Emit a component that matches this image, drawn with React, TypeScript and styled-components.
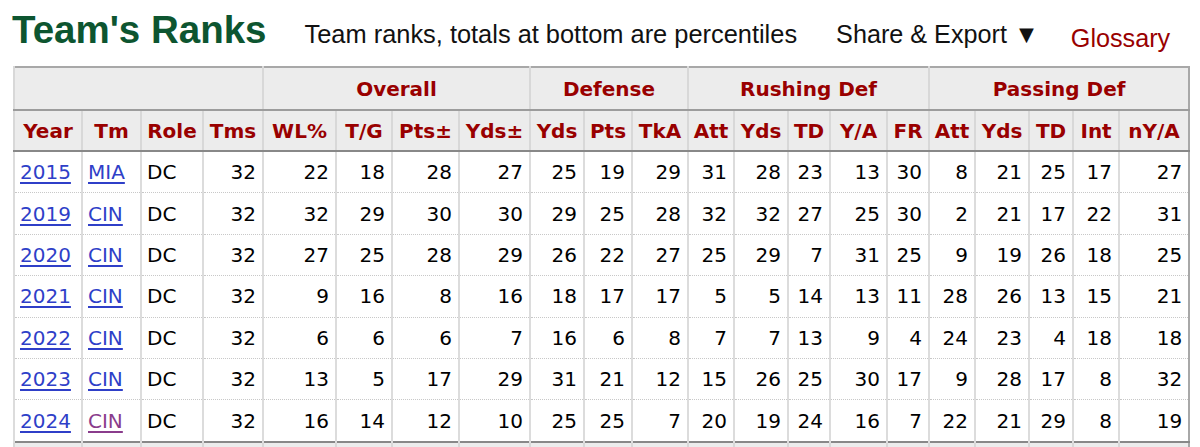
import styled, { createGlobalStyle } from "styled-components";

const GlobalStyle = createGlobalStyle`
  body {
    margin: 0;
    background: #fff;
    font-family: "DejaVu Sans", Verdana, sans-serif;
  }
`

const Page = styled.div`
  padding: 8px 12px 0 13px;
  width: 1175px;
`

const HeadingBar = styled.div`
  display: flex;
  align-items: baseline;
  height: 58px;
  font-family: "Liberation Sans", Arial, sans-serif;
`

const Title = styled.h2`
  margin: 0;
  font-size: 38.5px;
  font-weight: 700;
  color: #0d5530;
  margin-right: 38px;
  margin-left: -1px;
`

const Note = styled.span`
  font-size: 25.4px;
  color: #111;
  margin-right: 39px;
`

const Share = styled.span`
  font-size: 25.2px;
  color: #111;
  margin-right: 32px;
`

const Glossary = styled.span`
  font-size: 25.2px;
  color: #990000;
  position: relative;
  top: 4px;
`

const Table = styled.table`
  border-collapse: collapse;
  table-layout: fixed;
  width: 1175px;
  border: 2px solid #a8a8a8;
  border-bottom: none;
  font-size: 20px;
`

const GroupCell = styled.th`
  background: #ececec;
  color: #990000;
  font-weight: 700;
  height: 41px;
  padding: 0;
  text-align: center;
  border-left: 2px solid #d8d8d8;
  border-bottom: 2px solid #9c9c9c;
`

const HeadCell = styled.th`
  background: #ececec;
  color: #990000;
  font-weight: 700;
  height: 39px;
  padding: 0;
  text-align: center;
  border-left: 2px solid #d8d8d8;
  border-bottom: 2px solid #888;
  white-space: nowrap;
`

const Cell = styled.td<{ $left?: boolean }>`
  height: 40.4px;
  padding: 0 ${({ $left }) => ($left ? "0 0 5px" : "6px 0 0")};
  text-align: ${({ $left }) => ($left ? "left" : "right")};
  color: #000;
  border-left: 2px solid #dcdcdc;
  border-bottom: 1px dotted #c8c8c8;
  white-space: nowrap;
`

const Row = styled.tr`
  &:last-child td {
    border-bottom: none;
  }
`

const FootCell = styled.td`
  height: 10px;
  padding: 0;
  background: #ececec;
  border-left: 2px solid #d8d8d8;
  border-top: 2px solid #888;
`

const YearLink = styled.a<{ $visited?: boolean }>`
  color: ${({ $visited }) => ($visited ? "#8a3c8c" : "#2f3fc8")};
  text-decoration: underline;
  text-underline-offset: 3px;
`

const widths = [68, 59, 62, 60, 73, 56, 67, 71, 54, 48, 56, 46, 54, 42, 57, 42, 46, 54, 44, 46, 70]

const groups: [string, number][] = [
  ["", 4],
  ["Overall", 4],
  ["Defense", 3],
  ["Rushing Def", 5],
  ["Passing Def", 5],
]

const columns = [
  "Year", "Tm", "Role", "Tms", "WL%", "T/G", "Pts±", "Yds±", "Yds", "Pts", "TkA",
  "Att", "Yds", "TD", "Y/A", "FR", "Att", "Yds", "TD", "Int", "nY/A",
]

type RankRow = { year: string; tm: string; visited?: boolean; ranks: number[] }

const rows: RankRow[] = [
  { year: "2015", tm: "MIA", ranks: [32, 22, 18, 28, 27, 25, 19, 29, 31, 28, 23, 13, 30, 8, 21, 25, 17, 27] },
  { year: "2019", tm: "CIN", ranks: [32, 32, 29, 30, 30, 29, 25, 28, 32, 32, 27, 25, 30, 2, 21, 17, 22, 31] },
  { year: "2020", tm: "CIN", ranks: [32, 27, 25, 28, 29, 26, 22, 27, 25, 29, 7, 31, 25, 9, 19, 26, 18, 25] },
  { year: "2021", tm: "CIN", ranks: [32, 9, 16, 8, 16, 18, 17, 17, 5, 5, 14, 13, 11, 28, 26, 13, 15, 21] },
  { year: "2022", tm: "CIN", ranks: [32, 6, 6, 6, 7, 16, 6, 8, 7, 7, 13, 9, 4, 24, 23, 4, 18, 18] },
  { year: "2023", tm: "CIN", ranks: [32, 13, 5, 17, 29, 31, 21, 12, 15, 26, 25, 30, 17, 9, 28, 17, 8, 32] },
  { year: "2024", tm: "CIN", visited: true, ranks: [32, 16, 14, 12, 10, 25, 25, 7, 20, 19, 24, 16, 7, 22, 21, 29, 8, 19] },
]

export default function App() {
  return (
    <Page>
      <GlobalStyle />
      <HeadingBar>
        <Title>Team's Ranks</Title>
        <Note>Team ranks, totals at bottom are percentiles</Note>
        <Share>Share &amp; Export ▼</Share>
        <Glossary>Glossary</Glossary>
      </HeadingBar>
      <Table>
        <colgroup>
          {widths.map((w, i) => <col key={i} style={{ width: w }} />)}
        </colgroup>
        <thead>
          <tr>
            {groups.map(([label, span], i) => (
              <GroupCell key={i} colSpan={span}>{label}</GroupCell>
            ))}
          </tr>
          <tr>
            {columns.map((c, i) => <HeadCell key={i}>{c}</HeadCell>)}
          </tr>
        </thead>
        <tbody>
          {rows.map(r => (
            <Row key={r.year}>
              <Cell $left><YearLink href="#">{r.year}</YearLink></Cell>
              <Cell $left><YearLink href="#" $visited={r.visited}>{r.tm}</YearLink></Cell>
              <Cell $left>DC</Cell>
              {r.ranks.map((n, i) => <Cell key={i}>{n}</Cell>)}
            </Row>
          ))}
          <tr>
            {columns.map((_, i) => <FootCell key={i} />)}
          </tr>
        </tbody>
      </Table>
    </Page>
  )
}
